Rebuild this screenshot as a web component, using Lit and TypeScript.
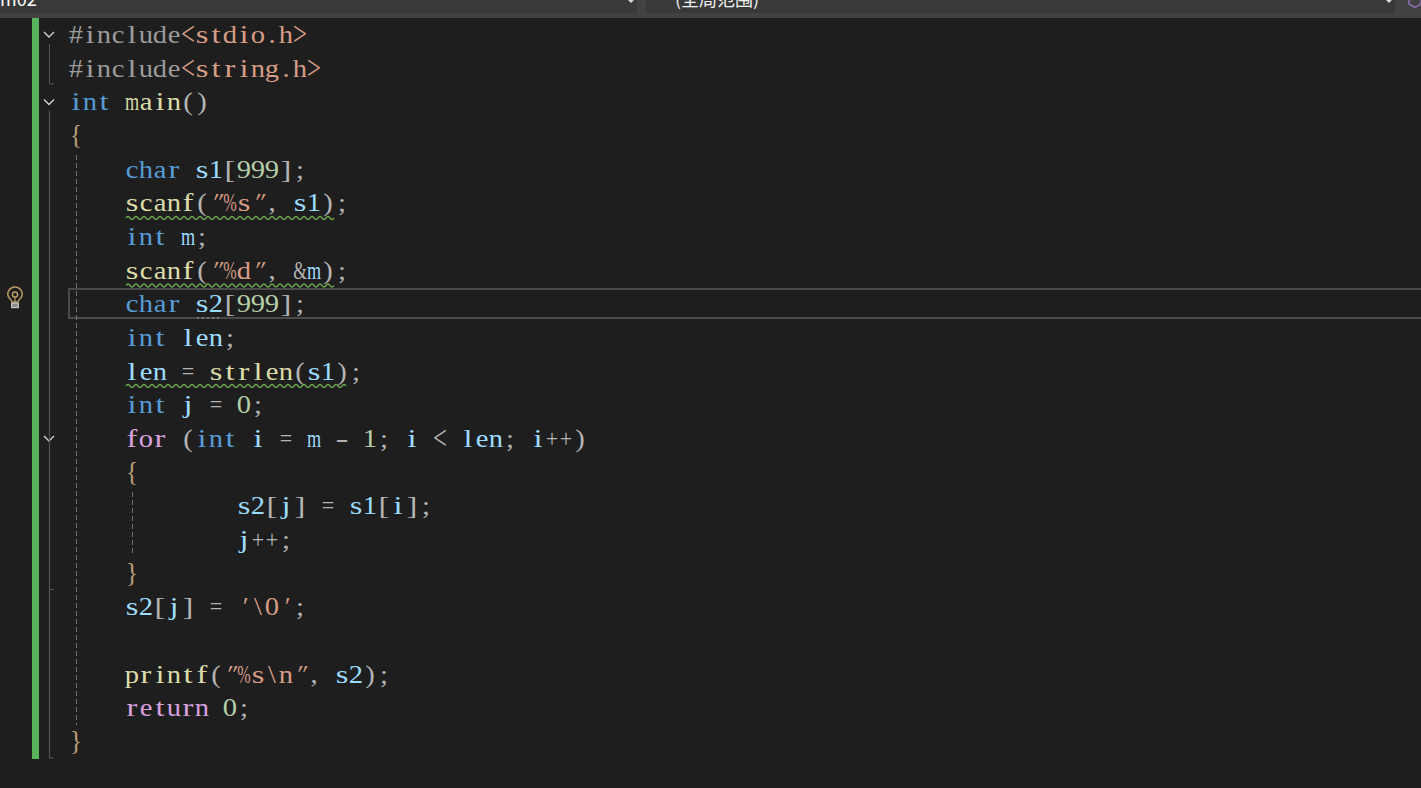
import { LitElement, html, css, svg } from "lit";
import { customElement } from "lit/decorators.js";

type Tok = [string, string];
const lines: Tok[][] = [
  [["pp", "#include"], ["st", "<stdio.h>"]],
  [["pp", "#include"], ["st", "<string.h>"]],
  [["kw", "int"], ["pl", " "], ["fn", "main"], ["pu", "()"]],
  [["br", "{"]],
  [["pl", "    "], ["kw", "char"], ["pl", " "], ["va", "s1"], ["pu", "["], ["nu", "999"], ["pu", "];"]],
  [["pl", "    "], ["fn", "scanf"], ["pu", "("], ["st", "\"%s\""], ["pu", ", "], ["va", "s1"], ["pu", ");"]],
  [["pl", "    "], ["kw", "int"], ["pl", " "], ["va", "m"], ["pu", ";"]],
  [["pl", "    "], ["fn", "scanf"], ["pu", "("], ["st", "\"%d\""], ["pu", ", &"], ["va", "m"], ["pu", ");"]],
  [["pl", "    "], ["kw", "char"], ["pl", " "], ["va", "s2"], ["pu", "["], ["nu", "999"], ["pu", "];"]],
  [["pl", "    "], ["kw", "int"], ["pl", " "], ["va", "len"], ["pu", ";"]],
  [["pl", "    "], ["va", "len"], ["pu", " = "], ["fn", "strlen"], ["pu", "("], ["va", "s1"], ["pu", ");"]],
  [["pl", "    "], ["kw", "int"], ["pl", " "], ["va", "j"], ["pu", " = "], ["nu", "0"], ["pu", ";"]],
  [["pl", "    "], ["ct", "for"], ["pu", " ("], ["kw", "int"], ["pl", " "], ["va", "i"], ["pu", " = "], ["va", "m"], ["pu", " - "], ["nu", "1"], ["pu", "; "], ["va", "i"], ["pu", " < "], ["va", "len"], ["pu", "; "], ["va", "i"], ["pu", "++)"]],
  [["pl", "    "], ["br", "{"]],
  [["pl", "            "], ["va", "s2"], ["pu", "["], ["va", "j"], ["pu", "] = "], ["va", "s1"], ["pu", "["], ["va", "i"], ["pu", "];"]],
  [["pl", "            "], ["va", "j"], ["pu", "++;"]],
  [["pl", "    "], ["br", "}"]],
  [["pl", "    "], ["va", "s2"], ["pu", "["], ["va", "j"], ["pu", "] = "], ["st", "'\\0'"], ["pu", ";"]],
  [["pl", " "]],
  [["pl", "    "], ["fn", "printf"], ["pu", "("], ["st", "\"%s\\n\""], ["pu", ", "], ["va", "s2"], ["pu", ");"]],
  [["pl", "    "], ["ct", "return"], ["pl", " "], ["nu", "0"], ["pu", ";"]],
  [["br", "}"]],
];
const squiggles: [number, number, number][] = [[126, 334, 218], [126, 334, 285.5], [126, 347, 386]];

const cellClass: Record<string, string> = {
  m: "cell nm", "%": "cell np", "&": "cell na", '"': "cell qt", "'": "cell qs",
  "<": "cell ang", ">": "cell ang", "-": "cell dash", "+": "cell nr", "=": "cell nr",
  "[": "cell sq", "]": "cell sq", "{": "cell brc", "}": "cell brc",
  i: "cell tn", l: "cell tn", j: "cell tn", t: "cell tn", r: "cell tn", f: "cell tn",
  s: "cell tn",
};

function wave(x0: number, x1: number, y: number) {
  let d = `M${x0} ${y}q2 -3 4 0`;
  for (let x = x0 + 4; x + 4 <= x1; x += 4) d += "t4 0";
  return d;
}

@customElement("app-root")
export class AppRoot extends LitElement {
  static styles = css`
    :host { display: block; width: 1421px; height: 788px; overflow: hidden; background: #1e1e1e; position: relative; }
    .nav { display: flex; height: 18px; background: #424242; gap: 9px; padding-bottom: 5px; box-sizing: border-box; }
    .combo { height: 13px; background: #393939; position: relative; overflow: hidden; color: #fff; font: 18px/24px "Noto Sans CJK SC", "Noto Sans", sans-serif; }
    .combo span { display: block; margin-top: -14px; white-space: pre; }
    .c1 { width: 637px; }
    .c2 { width: 749px; padding-left: 29px; box-sizing: border-box; color: #f1f1f1; }
    .arrow { position: absolute; right: 3px; top: 0; width: 0; height: 0; border: 3px solid transparent; border-top-color: #d8d8d8; }
    .proj { flex: 1; position: relative; overflow: hidden; }
    .proj svg { position: absolute; left: 3px; top: -7px; }
    .editor { display: flex; height: 770px; position: relative; }
    .glyph { width: 32px; flex: none; }
    .change { width: 7px; height: 741px; background: #57b45c; flex: none; }
    .fold { width: 30px; flex: none; }
    .code { flex: 1; font: 26px/33.68px "Liberation Serif", serif; }
    .line { height: 33.68px; white-space: pre; }
    .cell { display: inline-flex; justify-content: center; width: 14px; transform: scaleX(1.1); }
    .tn { transform: scaleX(1.25); }
    .nm { transform: scaleX(0.7); }
    .np { transform: scaleX(0.62); }
    .na { transform: scaleX(0.68); }
    .nr { transform: scaleX(0.85); }
    .qt { transform: skewX(-24deg); }
    .qs { transform: skewX(-14deg); }
    .ang { transform: scale(0.95, 1.3); }
    .dash { transform: scaleX(1.5); }
    .sq { transform: scaleX(1.25); }
    .brc { transform: scale(1, 1.05); }
    .pp { color: #9b9b9b; } .st { color: #d69d85; } .kw { color: #569cd6; } .fn { color: #dcdcaa; }
    .pu { color: #b4b4b4; } .va { color: #9cdcfe; } .nu { color: #b5cea8; } .ct { color: #d8a0df; }
    .br { color: #bb9b78; } .pl { color: #dcdcdc; }
    .overlay { position: absolute; left: 0; top: -18px; pointer-events: none; }
    .current { position: absolute; left: 68px; right: 0; top: 270px; height: 31px; border: 2px solid #4a4a4a; border-right: none; box-sizing: border-box; }
  `;

  render() {
    return html`
      <div class="nav">
        <div class="combo c1"><span>m02</span><i class="arrow"></i></div>
        <div class="combo c2"><span>(全局范围)</span><i class="arrow"></i></div>
        <div class="proj">
          <svg width="16" height="16" viewBox="0 0 16 16" fill="none" stroke="#8a6fb5" stroke-width="1.5"><path d="M8 1.5 14 5v6l-6 3.5L2 11V5z"/></svg>
        </div>
      </div>
      <div class="editor">
        <div class="glyph"></div>
        <div class="change"></div>
        <div class="fold"></div>
        <div class="code">
          ${lines.map((l) => html`<div class="line">${l.map(([c, t]) => html`<span class=${c}>${[...t].map((ch) => html`<span class=${cellClass[ch] ?? "cell"}>${ch}</span>`)}</span>`)}</div>`)}
        </div>
        <div class="current"></div>
        <svg class="overlay" width="1421" height="788" fill="none">
          ${this.decorations()}
        </svg>
      </div>
    `;
  }

  decorations() {
    const chevron = (y: number) => svg`<path d="M44 ${y - 2.5} 49 ${y + 2.5} 54 ${y - 2.5}" stroke="#d0d0d0" stroke-width="1.4"/>`;
    return svg`
      ${[34.5, 102, 438.5].map(chevron)}
      <path d="M49.5 44V84H54" stroke="#555"/>
      <path d="M49.5 111V758H54" stroke="#555" stroke-width="1.2"/>
      <path d="M49.5 448V589.5H54" stroke="#555"/>
      <path d="M76.5 155V725" stroke="#747474" stroke-dasharray="5 3"/>
      <path d="M132.5 492V556" stroke="#747474" stroke-dasharray="5 3"/>
      ${squiggles.map(([a, b, y]) => svg`<path d=${wave(a, b, y)} stroke="#6aa84f" stroke-width="1.4"/>`)}
      <path d="M197 318H222" stroke="#a8a8a8" stroke-dasharray="2 3" stroke-width="1"/>
      <g stroke="#b89c64" stroke-width="1.5">
        <path d="M12 302c0-2.5-4.3-3.5-4.3-7.7a7.3 7.3 0 0 1 14.6 0c0 4.2-4.3 5.2-4.3 7.7z"/>
        <circle cx="15" cy="294.5" r="2.6"/>
        <path d="M15 297v5" stroke-width="1.2"/>
      </g>
      <rect x="11.7" y="303.2" width="6.6" height="4.4" fill="#8a8a8a" stroke="#c8c8c8" stroke-width="1.2"/>
    `;
  }
}
